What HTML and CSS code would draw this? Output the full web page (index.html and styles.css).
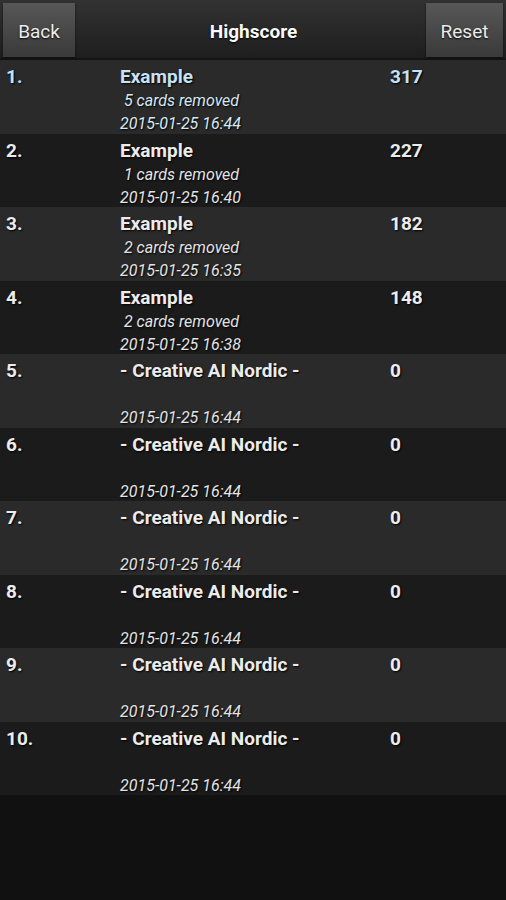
FILE: index.html
```html
<!DOCTYPE html>
<html>
<head>
<meta charset="utf-8">
<link rel="stylesheet" href="styles.css">
</head>
<body>
<div class="screen">
  <header class="topbar">
    <div class="btn">Back</div>
    <div class="title">Highscore</div>
    <div class="btn">Reset</div>
  </header>
  <div class="list">
    <div class="row odd hl"><div class="rank">1.</div><div class="info"><div class="name">Example</div><div class="sub">&nbsp;5 cards removed</div><div class="date">2015-01-25 16:44</div></div><div class="score">317</div></div>
    <div class="row even"><div class="rank">2.</div><div class="info"><div class="name">Example</div><div class="sub">&nbsp;1 cards removed</div><div class="date">2015-01-25 16:40</div></div><div class="score">227</div></div>
    <div class="row odd"><div class="rank">3.</div><div class="info"><div class="name">Example</div><div class="sub">&nbsp;2 cards removed</div><div class="date">2015-01-25 16:35</div></div><div class="score">182</div></div>
    <div class="row even"><div class="rank">4.</div><div class="info"><div class="name">Example</div><div class="sub">&nbsp;2 cards removed</div><div class="date">2015-01-25 16:38</div></div><div class="score">148</div></div>
    <div class="row odd"><div class="rank">5.</div><div class="info"><div class="name">- Creative AI Nordic -</div><div class="sub">&nbsp;</div><div class="date">2015-01-25 16:44</div></div><div class="score">0</div></div>
    <div class="row even"><div class="rank">6.</div><div class="info"><div class="name">- Creative AI Nordic -</div><div class="sub">&nbsp;</div><div class="date">2015-01-25 16:44</div></div><div class="score">0</div></div>
    <div class="row odd"><div class="rank">7.</div><div class="info"><div class="name">- Creative AI Nordic -</div><div class="sub">&nbsp;</div><div class="date">2015-01-25 16:44</div></div><div class="score">0</div></div>
    <div class="row even"><div class="rank">8.</div><div class="info"><div class="name">- Creative AI Nordic -</div><div class="sub">&nbsp;</div><div class="date">2015-01-25 16:44</div></div><div class="score">0</div></div>
    <div class="row odd"><div class="rank">9.</div><div class="info"><div class="name">- Creative AI Nordic -</div><div class="sub">&nbsp;</div><div class="date">2015-01-25 16:44</div></div><div class="score">0</div></div>
    <div class="row even"><div class="rank">10.</div><div class="info"><div class="name">- Creative AI Nordic -</div><div class="sub">&nbsp;</div><div class="date">2015-01-25 16:44</div></div><div class="score">0</div></div>
  </div>
</div>
</body>
</html>
```
FILE: styles.css
```css
html, body {
  margin: 0;
  padding: 0;
  background: #111111;
}
.screen {
  width: 506px;
  height: 900px;
  background: #111111;
  font-family: Roboto, "Liberation Sans", sans-serif;
  color: #ececec;
  overflow: hidden;
}
.topbar {
  height: 58px;
  box-sizing: border-box;
  display: flex;
  align-items: center;
  justify-content: space-between;
  padding: 2px 3px 0;
  background: linear-gradient(#323232, #1e1e1e);
  border-bottom: 2px solid #141414;
  height: 60px;
}
.btn {
  height: 54px;
  display: flex;
  align-items: center;
  justify-content: center;
  padding-top: 2px;
  box-sizing: border-box;
  font-size: 19px;
  color: #ececec;
  background: linear-gradient(#575757, #3a3a3a);
  box-shadow: 0 1px 2px rgba(0,0,0,0.6);
  text-shadow: 0 1px 2px #000;
}
.btn:first-child { width: 72px; }
.btn:last-child { width: 77px; }
.title {
  font-weight: bold;
  font-size: 19px;
  color: #fafafa;
  text-shadow: 0 1px 2px #000;
  padding-left: 6px;
  padding-top: 2px;
}
.list {
  display: flex;
  flex-direction: column;
}
.row {
  height: 73.5px;
  box-sizing: border-box;
  display: flex;
  padding-top: 5px;
  text-shadow: 1px 1px 2px #000;
}
.odd { background: #2a2a2a; }
.even { background: #1b1b1b; }
.rank {
  width: 114px;
  padding-left: 6px;
  font-weight: bold;
  font-size: 19px;
  line-height: 24px;
}
.info {
  width: 270px;
}
.name {
  font-weight: bold;
  font-size: 19px;
  line-height: 24px;
}
.sub, .date {
  font-style: italic;
  font-size: 16px;
  line-height: 23px;
  color: #e4e4e4;
}
.score {
  font-weight: bold;
  font-size: 19px;
  line-height: 24px;
}
.hl .rank, .hl .name, .hl .score { color: #c5e3f7; }
.hl .sub, .hl .date { color: #d6e8f4; }
```
